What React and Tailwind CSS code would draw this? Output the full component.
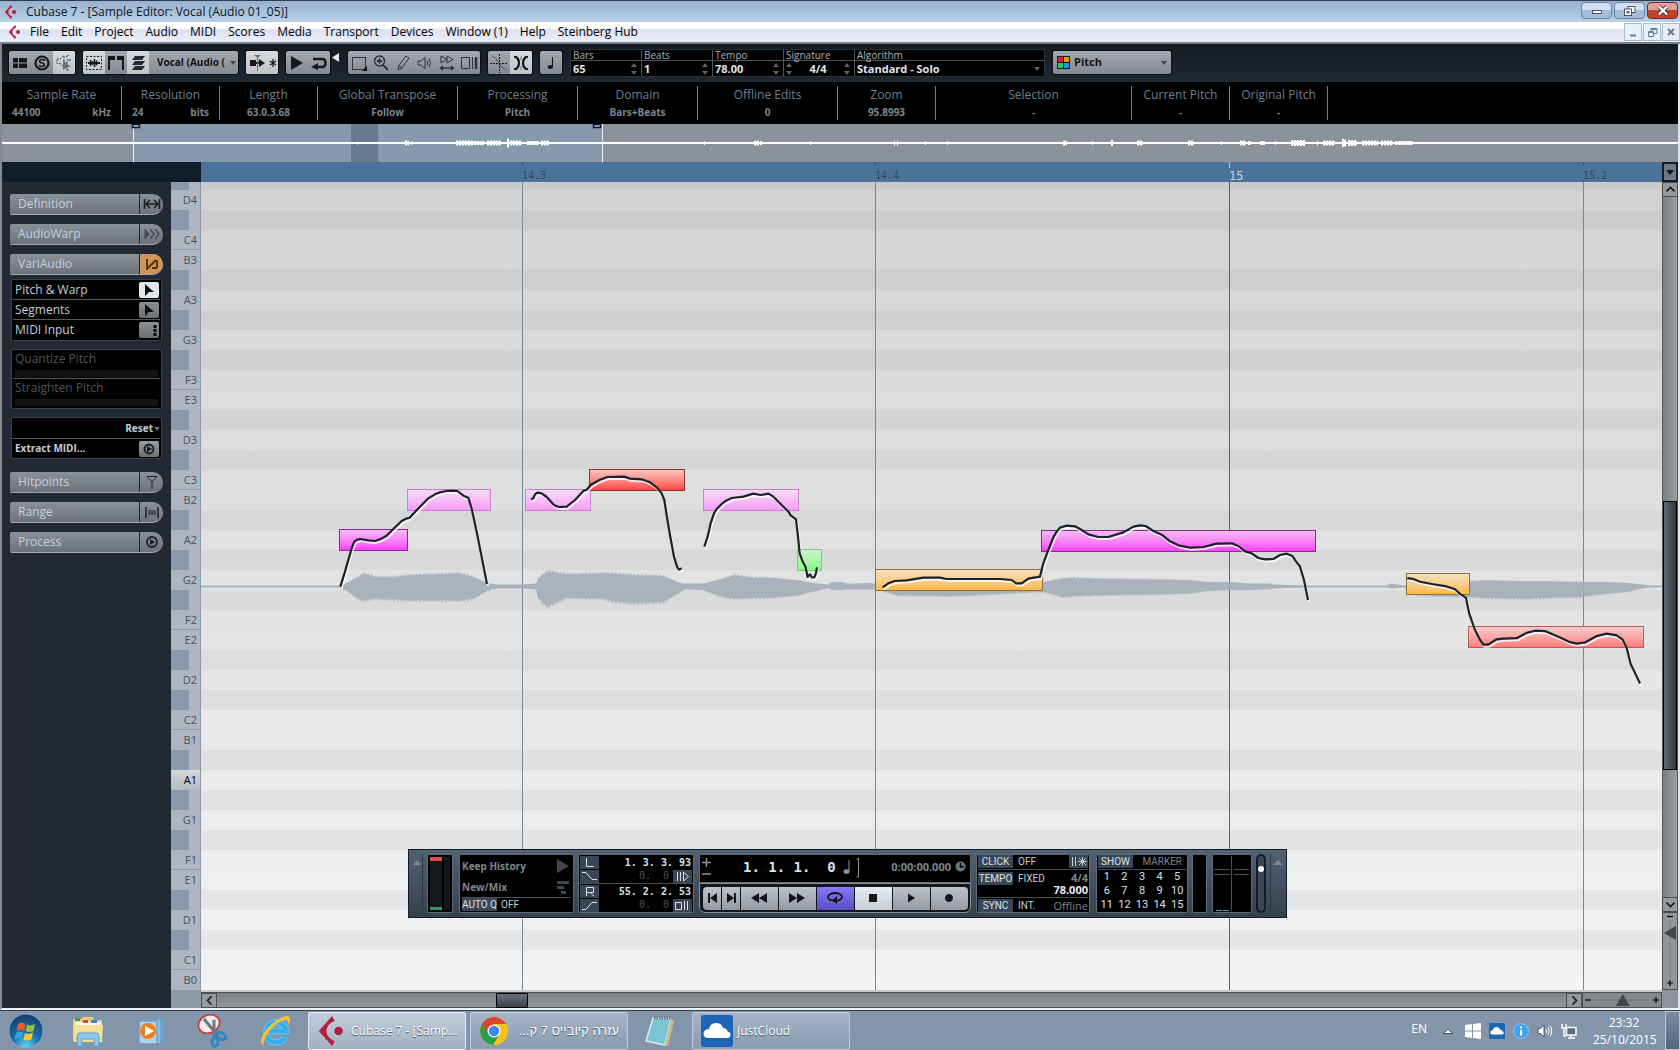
import { useState } from 'react';
import clsx from 'clsx';

const MENU = ['File', 'Edit', 'Project', 'Audio', 'MIDI', 'Scores', 'Media', 'Transport', 'Devices', 'Window (1)', 'Help', 'Steinberg Hub'];

const INFO = [
  { label: 'Sample Rate', value: '44100', unit: 'kHz', width: 'w-[120px]' },
  { label: 'Resolution', value: '24', unit: 'bits', width: 'w-[98px]' },
  { label: 'Length', value: '63.0.3.68', width: 'w-[98px]' },
  { label: 'Global Transpose', value: 'Follow', width: 'w-[140px]' },
  { label: 'Processing', value: 'Pitch', width: 'w-[120px]' },
  { label: 'Domain', value: 'Bars+Beats', width: 'w-[120px]' },
  { label: 'Offline Edits', value: '0', width: 'w-[140px]' },
  { label: 'Zoom', value: '95.8993', width: 'w-[98px]' },
  { label: 'Selection', value: '-', width: 'w-[196px]' },
  { label: 'Current Pitch', value: '-', width: 'w-[98px]' },
  { label: 'Original Pitch', value: '-', width: 'w-[98px]' },
];

// top to bottom; '' is a black key
const OCTAVE = ['B', '', 'A', '', 'G', '', 'F', 'E', '', 'D', '', 'C'];
const KEYS = [
  'D4', '', 'C4',
  ...[3, 2, 1].flatMap((octave) => OCTAVE.map((note) => (note ? note + octave : ''))),
  'B0',
];

const BEAT_LINES = [
  { x: 321, label: '14.3' },
  { x: 674, label: '14.4' },
  { x: 1028, label: '15', bar: true },
  { x: 1382, label: '15.2' },
];

const NOTE_COLORS = {
  magenta: 'border-[#8a2a8c] from-[#f5b9f5] to-[#f93cf9]',
  pink: 'border-[#c87fcb] from-[#f2dcf2] to-[#f99df9]',
  red: 'border-[#8c2f2f] from-[#f5c3c3] to-[#fd4444]',
  rose: 'border-[#c25555] from-[#f3cccc] to-[#fc7d7d]',
  green: 'border-[#7ccb7c] from-[#cdf0cd] to-[#86f986]',
  orange: 'border-[#8d7040] from-[#f4e0c2] to-[#fdb944]',
};

const NOTES = [
  { x: 138, y: 347, w: 69, color: 'magenta' },
  { x: 206, y: 307, w: 84, color: 'pink' },
  { x: 324, y: 307, w: 66, color: 'pink' },
  { x: 388, y: 287, w: 96, color: 'red' },
  { x: 502, y: 307, w: 96, color: 'pink' },
  { x: 596, y: 367, w: 25, color: 'green' },
  { x: 674, y: 387, w: 168, color: 'orange' },
  { x: 840, y: 348, w: 275, color: 'magenta' },
  { x: 1205, y: 391, w: 64, color: 'orange' },
  { x: 1267, y: 444, w: 176, color: 'rose' },
];

// pitch curves, stored at three times the canvas scale
const CURVES = [
  {
    x: 119, y: 258, sy: 3,
    points: '61,440 75,395 95,325 103,305 112,299 120,297 145,301 165,303 182,297 200,287 220,267 245,243 258,236 268,234 300,200 325,175 345,163 360,157 378,153 395,152 412,153 430,167 445,173 455,205 470,275 485,350 501,432',
  },
  {
    x: 119, y: 258, sy: 3,
    points: '633,178 640,175 645,163 652,158 665,160 680,171 700,193 710,199 720,201 740,200 765,180 790,153 800,149 812,135 840,119 862,111 912,110 930,116 965,118 990,127 1010,142 1025,160 1033,180 1040,225 1050,285 1062,350 1072,382 1077,389 1085,385',
  },
  {
    x: 119, y: 258, sy: 3,
    points: '1153,320 1163,290 1172,250 1182,220 1190,207 1205,192 1218,182 1235,174 1270,170 1300,161 1322,165 1345,161 1360,170 1385,195 1405,215 1412,226 1428,238 1434,290 1439,340 1447,362 1457,382 1463,411 1470,403 1475,412 1483,412 1488,400 1491,382',
  },
  {
    x: 639, y: 298, sy: 3,
    points: '128,322 145,310 165,303 200,301 250,293 300,293 320,297 480,297 515,300 528,310 545,310 565,296 600,290 610,250 625,210 640,172 650,155 660,143 680,137 705,139 725,150 745,163 775,171 805,171 850,157 880,140 900,136 917,138 940,153 965,164 990,184 1015,196 1050,203 1090,201 1130,191 1175,190 1195,198 1215,214 1235,220 1255,234 1275,238 1300,237 1320,225 1340,221 1357,228 1368,244 1380,260 1392,300 1404,360',
  },
  {
    x: 1159, y: 298, sy: 2.8,
    points: '142,275 160,277 180,285 220,292 255,297 285,306 300,319 318,330 328,375 345,420 360,448 370,461 385,461 410,446 430,444 470,443 500,428 525,422 555,423 600,441 630,454 650,458 675,455 710,437 740,430 770,435 788,447 800,470 812,515 825,540 840,570',
  },
];

// [x, height above, height below] of the waveform
const ENVELOPE = [
  [0, 1, 1], [138, 1, 1], [146, 4, 5], [152, 8, 10], [159, 12, 15], [163, 15, 16], [174, 11, 14], [192, 11, 15],
  [209, 13, 16], [236, 14, 16], [259, 15, 16], [272, 11, 14], [286, 4, 5], [296, 2, 2], [321, 2, 2], [335, 3, 3],
  [337, 9, 12], [342, 14, 19], [347, 17, 23], [354, 16, 19], [366, 14, 13], [402, 15, 14], [412, 15, 17], [432, 13, 19],
  [462, 12, 18], [477, 5, 8], [484, 3, 3], [502, 3, 4], [519, 8, 11], [534, 13, 14], [552, 10, 13], [569, 10, 13],
  [596, 7, 10], [619, 3, 4], [627, 2, 2], [631, 5, 4], [639, 5, 4], [649, 3, 3], [669, 4, 3], [674, 3, 3],
  [697, 8, 10], [749, 9, 11], [789, 8, 9], [842, 5, 6], [852, 7, 9], [861, 9, 12], [872, 10, 11], [892, 9, 10],
  [959, 8, 9], [989, 7, 8], [1006, 5, 5], [1029, 5, 4], [1049, 3, 4], [1069, 3, 3], [1072, 2, 2], [1106, 1, 1],
  [1186, 1, 1], [1190, 3, 2], [1203, 1, 1], [1215, 6, 10], [1269, 6, 12], [1286, 7, 13], [1322, 6, 14],
  [1346, 6, 13], [1379, 5, 12], [1406, 5, 8], [1426, 4, 6], [1442, 2, 2], [1448, 1, 1], [1461, 1, 1],
];

// [x, width, height] of the bursts on the overview line
const OVERVIEW_PEAKS = [
  [357, 1, 2], [405, 4, 4], [411, 2, 2], [456, 18, 4], [474, 10, 3], [487, 14, 4], [507, 2, 8], [510, 12, 4],
  [527, 12, 3], [541, 8, 4], [704, 1, 3], [754, 5, 4], [760, 2, 3], [810, 1, 3], [894, 1, 4], [897, 1, 4],
  [925, 1, 3], [947, 1, 3], [1063, 4, 4], [1092, 1, 3], [1111, 2, 5], [1137, 6, 4], [1188, 6, 4], [1221, 1, 3],
  [1240, 6, 4], [1248, 3, 3], [1260, 5, 3], [1275, 1, 3], [1291, 14, 5], [1317, 1, 4], [1323, 12, 4], [1342, 4, 7],
  [1348, 9, 5], [1362, 16, 4], [1381, 12, 4], [1395, 18, 3],
];

const peakPath = OVERVIEW_PEAKS.map(([x, w, h]) => {
  let d = '';
  for (let i = 0; i < w; i += 1) {
    const size = i % 3 === 2 ? Math.max(2, h - 2) : h;
    d += `M${x - 1.5 + i} ${18.5 - size / 2} V${19.5 + size / 2} `;
  }
  return d;
}).join('');

const wavePath = () => {
  const top = [];
  const bottom = [];
  let seg = 0;
  for (let x = 0; x <= 1461; x += 1) {
    while (seg < ENVELOPE.length - 2 && x > ENVELOPE[seg + 1][0]) seg += 1;
    const [x0, u0, d0] = ENVELOPE[seg];
    const [x1, u1, d1] = ENVELOPE[seg + 1];
    const t = (x - x0) / (x1 - x0);
    const up = u0 + (u1 - u0) * t;
    const down = d0 + (d1 - d0) * t;
    const ripple = x % 2 ? 1 : 0.82;
    const drift = 1 + 0.06 * Math.sin(x * 1.7);
    top.push(`${x},${(404.5 - up * (up > 3 ? ripple * drift : 1)).toFixed(1)}`);
    bottom.unshift(`${x},${(404.5 + down * (down > 3 ? ripple * drift : 1)).toFixed(1)}`);
  }
  return [...top, ...bottom].join(' ');
};

const WAVE = wavePath();

const Svg = ({ w = 20, h = 20, className, children }) => (
  <svg
    width={w}
    height={h}
    viewBox={`0 0 ${w} ${h}`}
    fill="none"
    stroke="currentColor"
    className={clsx('shrink-0', className)}
    aria-hidden="true"
  >
    {children}
  </svg>
);

const Caret = ({ className }) => (
  <Svg w={6} h={4} className={className}><path d="M0 0 H6 L3 4 Z" fill="currentColor" stroke="none" /></Svg>
);

const CubaseLogo = ({ size = 16 }) => (
  <svg width={size} height={size} viewBox="0 0 16 16" className="shrink-0" aria-hidden="true">
    <path d="M8 0 L1 8 L8 16 L9.500 13.500 Q5 11.500 5 8 Q5 4.500 9.500 2.500 Z" fill="#b3203c" />
    <circle cx="11.500" cy="8" r="2.300" fill="#b3203c" />
  </svg>
);

const TitleBar = () => (
  <header className="flex h-[22px] items-center border-t border-[#2c3a4c] bg-linear-to-b from-[#97b1cf] to-[#b9d0e8] pr-0.5 pl-1">
    <CubaseLogo size={14} />
    <h1 className="ml-2 text-[12px] leading-4 text-[#0c1622]">Cubase 7 - [Sample Editor: Vocal (Audio 01_05)]</h1>
    <div className="ml-auto flex gap-0.5 self-start pt-px">
      <button aria-label="Minimize" className="flex h-[17px] w-[31px] items-center justify-center rounded-sm border border-[#6b86a6] bg-linear-to-b from-[#d2e1f1] from-50% to-[#a3bdd9] to-50%">
        <Svg w={12} h={8}><rect x="1.5" y="3.5" width="9" height="3" fill="#fff" stroke="#4a5666" /></Svg>
      </button>
      <button aria-label="Restore" className="flex h-[17px] w-[31px] items-center justify-center rounded-sm border border-[#6b86a6] bg-linear-to-b from-[#d2e1f1] from-50% to-[#a3bdd9] to-50%">
        <Svg w={14} h={12}>
          <rect x="5" y="1.5" width="7" height="6" fill="#fff" stroke="#4a5666" />
          <rect x="1.5" y="4" width="7" height="6.500" fill="#fff" stroke="#4a5666" />
          <rect x="4" y="6.500" width="2" height="1.500" stroke="#4a5666" />
        </Svg>
      </button>
      <button aria-label="Close" className="flex h-[17px] w-[31px] items-center justify-center rounded-sm border border-[#702a24] bg-linear-to-b from-[#e0a196] from-50% to-[#c2432b] to-50%">
        <Svg w={12} h={11}>
          <path d="M2 1.500 L10 9.500 M10 1.500 L2 9.500" stroke="#4a3a40" strokeWidth="4" />
          <path d="M2 1.500 L10 9.500 M10 1.500 L2 9.500" stroke="#fff" strokeWidth="2.200" />
        </Svg>
      </button>
    </div>
  </header>
);

const MenuBar = () => (
  <nav className="flex h-[22px] items-center border-b-2 border-[#7b8087] bg-linear-to-b from-white from-30% via-[#dce1f2] via-40% to-[#eceefa] pl-2">
    <CubaseLogo size={14} />
    <ul className="ml-2 flex gap-3 text-[12px] leading-4 text-black">
      {MENU.map((item) => (
        <li key={item}><button>{item}</button></li>
      ))}
    </ul>
    <div className="ml-auto flex gap-px text-[#6d7d90]">
      {[
        ['Minimize document', 'M4 10.500 H10'],
        ['Restore document', 'M6 6.500 V3.500 H12 V8.500 H9 M6 4.500 H12 M3.500 6.500 H8.500 V11.500 H3.500 Z M3.500 7.500 H8.500'],
        ['Close document', 'M4 4 L10 10 M10 4 L4 10'],
      ].map(([label, d]) => (
        <button key={label} aria-label={label} className="flex h-[18px] w-[18px] items-center justify-center border border-[#aebccb] bg-[#e6f0fa]">
          <Svg w={14} h={14}><path d={d} strokeWidth={label[0] === 'R' ? 1 : 2} /></Svg>
        </button>
      ))}
    </div>
  </nav>
);

const ToolGroup = ({ children }) => (
  <div className="flex h-[23px] shrink-0 overflow-hidden rounded-xs bg-linear-to-b from-[#a4a9af] to-[#848a91] text-[#15191c] shadow-[0_0_1px_1px_#0a0f14]">
    {children}
  </div>
);

const Tool = ({ label, on, narrow, dim, children }) => (
  <button
    aria-label={label}
    aria-pressed={!!on}
    className={clsx(
      'flex h-full items-center justify-center',
      narrow ? 'w-[10px]' : 'w-[22px]',
      on && 'bg-linear-to-b from-[#d8dadd] to-[#bfc3c7]',
      dim && 'text-[#2c3238]',
    )}
  >
    {children}
  </button>
);

const Stepper = () => (
  <Svg w={6} h={14} className="text-[#5c6268]">
    <path d="M0 5 L3 1 L6 5 Z M0 9 L3 13 L6 9 Z" fill="currentColor" stroke="none" />
  </Svg>
);

const Field = ({ label, value }) => {
  const [text, setText] = useState(value);
  return (
    <div className="flex w-[71px] flex-col border-r border-[#4e555b]">
      <label htmlFor={label} className="h-[11px] border-b border-[#4e555b] pl-0.5 text-[10px] leading-[11px] text-[#a9afb5]">{label}</label>
      <div className="flex flex-1 items-center pr-1 pl-0.5">
        {label === 'Signature' && <Stepper />}
        <input
          id={label}
          value={text}
          onChange={(e) => setText(e.target.value)}
          className={clsx('w-0 flex-1 bg-transparent text-[11px] leading-4 font-bold text-[#e2e5e8] outline-none', label === 'Signature' && 'text-center')}
        />
        <Stepper />
      </div>
    </div>
  );
};

const Toolbar = () => (
  <div className="flex h-[38px] items-center gap-2 bg-linear-to-b from-[#131b23] to-[#1e2933] pb-px pl-[7px]">
    <ToolGroup>
      <Tool label="Show info">
        <Svg w={18} h={18}><path d="M2 4 H7 V8.500 H2 Z M2 9.500 H7 V14 H2 Z M8 4 H16 V8.500 H8 Z M8 9.500 H16 V14 H8 Z" fill="currentColor" stroke="none" /></Svg>
      </Tool>
      <Tool label="Solo">
        <Svg w={18} h={18}>
          <circle cx="9" cy="9" r="6.500" strokeWidth="2.200" />
          <path d="M12 6.500 Q9 4.500 6.800 6.400 Q6 8.500 9 9 Q12 9.500 11.200 11.600 Q9 13.500 6 11.500" strokeWidth="1.600" />
        </Svg>
      </Tool>
      <Tool label="Acoustic feedback" on>
        <Svg w={20} h={20} className="text-[#3a4046]">
          <path d="M3 6 H6 L10 2.500 V14 L6 10.500 H3 Z" strokeDasharray="2 1" />
          <path d="M12 4 L15 2 M13 7 H17 M12 9 L14 10" />
          <path d="M9 7 L17 14 L13 14 L15 18 L13 18 L12 15 L9 17 Z" fill="#6a7076" stroke="none" />
        </Svg>
      </Tool>
    </ToolGroup>

    <ToolGroup>
      <Tool label="Show audio event" on>
        <Svg w={18} h={18}>
          <rect x="1.500" y="2.500" width="15" height="13" strokeDasharray="2 1.500" />
          <path d="M3 9 H15" strokeWidth="2" /><path d="M5.500 6 V12 M7.500 7 V11 M9.500 5 V13 M11.500 6.500 V11.500 M13.500 8 V10" strokeWidth="1.500" />
        </Svg>
      </Tool>
      <Tool label="Show regions">
        <Svg w={18} h={18}><path d="M1 2 H8 V6 H3 V16 H1 Z M17 2 H10 V6 H15 V16 H17 Z" fill="currentColor" stroke="none" /></Svg>
      </Tool>
      <Tool label="Show lanes" on>
        <Svg w={18} h={18}><path d="M6 2 H16 L13 6 H3 Z M6 7 H16 L13 11 H3 Z M6 12 H16 L13 16 H3 Z" fill="#23292e" stroke="none" /></Svg>
      </Tool>
      <div className="flex w-[89px] items-center pr-0.5 pl-2">
        <select aria-label="Edited clip" className="w-0 flex-1 appearance-none bg-transparent text-[10px] font-bold text-[#101417]">
          <option>Vocal (Audio (</option>
        </select>
        <Caret className="text-[#3f464d]" />
      </div>
    </ToolGroup>

    <ToolGroup>
      <Tool label="Auto-scroll" on>
        <Svg w={18} h={18}>
          <path d="M2 6 H8 V12 H2 Z M11 8 V5 L17 9 L11 13 V10 H8 V8 Z" fill="currentColor" stroke="none" />
          <path d="M9.500 3 V17" stroke="#6a7076" /><path d="M6 1 H13 L9.500 4 Z" fill="#6a7076" stroke="none" />
        </Svg>
      </Tool>
      <Tool label="Suspend auto-scroll" on narrow>
        <Svg w={8} h={10}><path d="M4 1 V9 M1 3 L7 7 M7 3 L1 7" strokeWidth="1.300" /></Svg>
      </Tool>
    </ToolGroup>

    <div className="flex items-start">
      <ToolGroup>
        <Tool label="Audition">
          <Svg w={18} h={18}><path d="M3 2 L15 9 L3 16 Z" fill="currentColor" stroke="none" /></Svg>
        </Tool>
        <Tool label="Audition loop">
          <Svg w={18} h={18}><path d="M3 5 H12 Q15.500 5 15.500 9 Q15.500 13 12 13 H4" strokeWidth="2.500" /><path d="M1 13 L8 9 V16 Z" fill="currentColor" stroke="none" /></Svg>
        </Tool>
      </ToolGroup>
      <Svg w={8} h={9} className="mt-0.5 ml-0.5 text-[#e4e6e8]"><path d="M7 0 V9 L0 4.500 Z" fill="currentColor" stroke="none" /></Svg>
    </div>

    <ToolGroup>
      <Tool label="Range selection" dim>
        <Svg w={18} h={18}><rect x="2.500" y="3.500" width="13" height="12" /><path d="M17 12 V17 H12 Z" fill="#111" stroke="none" /></Svg>
      </Tool>
      <Tool label="Zoom" dim>
        <Svg w={18} h={18}><circle cx="7.500" cy="7" r="5" strokeWidth="1.500" /><path d="M5 7 H10 M7.500 4.500 V9.500 M11 11 L16 16" strokeWidth="1.800" /></Svg>
      </Tool>
      <Tool label="Draw" dim>
        <Svg w={18} h={18}><path d="M4 16 L5 11.500 L12 2 L15 4 L8 14 Z M5 11.500 L8 14" /></Svg>
      </Tool>
      <Tool label="Play" dim>
        <Svg w={18} h={18}><path d="M2 7 H5 L9 3.500 V14.500 L5 11 H2 Z M11 6.500 Q12.500 9 11 11.500 M13 4.500 Q16 9 13 13.500" /></Svg>
      </Tool>
      <Tool label="Scrub" dim>
        <Svg w={18} h={18}><path d="M3 2 L9 5.500 L3 9 Z M9 2 L15 5.500 L9 9 Z" /><path d="M3 14 H15 M5 12 L2.500 14 L5 16 M13 12 L15.500 14 L13 16" strokeWidth="1.500" /></Svg>
      </Tool>
      <Tool label="Time warp" dim>
        <Svg w={18} h={18}><path d="M1.500 3.500 H9.500 V14.500 H1.500 Z M12.500 3 V15" /><path d="M16 3 V15" strokeWidth="2.500" /></Svg>
      </Tool>
    </ToolGroup>

    <ToolGroup>
      <Tool label="Snap to zero crossing">
        <Svg w={18} h={20}><path d="M2 3 Q6 4 9 10 T17 17" stroke="#4d5359" /><path d="M0 10.500 H18 M9.500 1 V20" strokeDasharray="2 1" /></Svg>
      </Tool>
      <Tool label="Snap" on>
        <Svg w={18} h={18}><path d="M2 3 H4 Q7 5 7 9 Q7 13 4 15 H2 M16 3 H14 Q11 5 11 9 Q11 13 14 15 H16" strokeWidth="2.200" /><path d="M9 2 V6 M9 12 V16" stroke="#777" /></Svg>
      </Tool>
    </ToolGroup>

    <ToolGroup>
      <Tool label="Quantize">
        <Svg w={14} h={18}><path d="M8.500 3 V13" strokeWidth="1.200" /><ellipse cx="6.300" cy="13" rx="2.700" ry="2" fill="currentColor" stroke="none" /></Svg>
      </Tool>
    </ToolGroup>

    <div className="flex h-[28px] w-[475px] rounded-xs border border-[#27323b] bg-black">
      <Field label="Bars" value="65" />
      <Field label="Beats" value="1" />
      <Field label="Tempo" value="78.00" />
      <Field label="Signature" value="4/4" />
      <div className="flex flex-1 flex-col">
        <label htmlFor="algorithm" className="h-[11px] border-b border-[#4e555b] pl-0.5 text-[10px] leading-[11px] text-[#a9afb5]">Algorithm</label>
        <div className="flex flex-1 items-center pr-1 pl-0.5">
          <select id="algorithm" className="flex-1 appearance-none bg-transparent text-[11px] leading-4 font-bold text-[#e2e5e8]">
            <option>Standard - Solo</option>
          </select>
          <Caret className="text-[#5c6268]" />
        </div>
      </div>
    </div>

    <ToolGroup>
      <div className="flex w-[118px] items-center pr-1 pl-1">
        <Svg w={13} h={13}>
          <rect x="0.500" y="0.500" width="12" height="12" fill="#111" />
          <path d="M1 1 H6 V6 H1 Z" fill="#d5262a" stroke="none" /><path d="M7 1 H12 V6 H7 Z" fill="#dd9822" stroke="none" />
          <path d="M1 7 H6 V12 H1 Z" fill="#24cf6b" stroke="none" /><path d="M7 7 H12 V12 H7 Z" fill="#2492dd" stroke="none" />
        </Svg>
        <select aria-label="Event colors" className="ml-1 flex-1 appearance-none bg-transparent text-[11px] font-bold text-[#101417]">
          <option>Pitch</option>
        </select>
        <Caret className="text-[#3f464d]" />
      </div>
    </ToolGroup>
  </div>
);

const InfoLine = () => (
  <dl className="flex h-[42px] bg-black py-1 text-[#7b858e]">
    {INFO.map(({ label, value, unit, width }) => (
      <div key={label} className={clsx('flex shrink-0 flex-col border-r border-[#757d85] text-center', width)}>
        <dt className="text-[12px] leading-[17px] text-[#6c7f90]">{label}</dt>
        <dd className={clsx('mt-px flex text-[10px] leading-4 font-bold', unit ? 'justify-between px-[10px]' : 'justify-center')}>
          <span>{value}</span>
          {unit && <span>{unit}</span>}
        </dd>
      </div>
    ))}
  </dl>
);

const Overview = () => (
  <div className="relative h-[38px] overflow-hidden bg-[#8b929b]">
    <div className="absolute inset-y-0 left-[131px] w-[470px] border-x border-[#eef1f4] bg-[#8799ad]" />
    <div className="absolute inset-y-0 left-[349px] w-[27px] bg-[#677b8f]" />
    <div className="absolute top-[18px] h-0.5 w-full bg-white" />
    <svg width="1678" height="38" className="absolute top-0 left-0" fill="none" aria-hidden="true">
      <path d={peakPath} stroke="#fff" />
      <path d="M130.500 0.500 H137.500 V3.500 H130.500 Z M591.500 0.500 H598.500 V3.500 H591.500 Z" fill="#a8c0d8" stroke="#0c1a30" strokeWidth="1.500" />
    </svg>
  </div>
);

const SectionButton = ({ label, active, children }) => (
  <button className="flex h-[21px] w-full overflow-hidden rounded-l-xs rounded-r-[11px] border-b border-[#a2a8ad] bg-linear-to-b from-[#8a9197] to-[#6b727a] text-left">
    <span className="flex-1 pl-2 text-[12px] leading-5 text-[#c5d0da]">{label}</span>
    <span className={clsx('flex h-full w-6 items-center justify-center border-l border-[#1f252b] text-[#1c2125]', active && 'bg-[#cf9558] text-[#4a2f10]')}>
      {children}
    </span>
  </button>
);

const PanelRow = ({ label, lit, children }) => (
  <div className="flex h-5 items-center justify-between border-b border-[#565b60] pr-px last:border-b-0">
    <span className="pl-0.5 text-[12px] leading-4 text-[#c3cdd5]">{label}</span>
    <button
      aria-label={label}
      className={clsx('flex h-4 w-5 items-center justify-center rounded-xs text-[#0c0e10]', lit ? 'bg-[#e3e6ea]' : 'bg-linear-to-b from-[#8b9094] to-[#6b7074]')}
    >
      {children}
    </button>
  </div>
);

const Pointer = () => (
  <Svg w={10} h={12}><path d="M1 0 L10 8 H5 L1 12 Z" fill="currentColor" stroke="none" /></Svg>
);

const Dial = ({ r = 5 }) => (
  <Svg w={14} h={14}><circle cx="7" cy="7" r={r} strokeWidth="1.800" /><path d="M5 4 L10 7 L5 10 Z" fill="currentColor" stroke="none" /></Svg>
);

const Sidebar = () => (
  <aside className="flex w-[169px] shrink-0 flex-col bg-[#222933]">
    <div className="h-5 bg-[#0f1c29]" />
    <div className="flex flex-col gap-[9px] px-2 pt-3">
      <SectionButton label="Definition">
        <Svg w={18} h={12}><path d="M1.500 1 V11 M16.500 1 V11 M3 6 H15 M7 2 L3 6 L7 10 M11 2 L15 6 L11 10" strokeWidth="1.600" /></Svg>
      </SectionButton>
      <SectionButton label="AudioWarp">
        <Svg w={16} h={10} className="text-[#474c52]"><path d="M1 0 L5 5 L1 10 Z" fill="currentColor" /><path d="M6 0 L10 5 L6 10 M11 0 L15 5 L11 10" strokeWidth="1.500" /></Svg>
      </SectionButton>
      <SectionButton label="VariAudio" active>
        <Svg w={14} h={12}><path d="M2 1 V11 L11 2 M12 2 V10 M7 10 H12" strokeWidth="1.800" /></Svg>
      </SectionButton>
    </div>

    <div className="mx-[9px] mt-1 flex flex-col gap-2">
      <div className="rounded-xs border border-[#3a424b] bg-black px-px">
        <PanelRow label="Pitch &amp; Warp" lit><Pointer /></PanelRow>
        <PanelRow label="Segments"><Pointer /></PanelRow>
        <PanelRow label="MIDI Input">
          <Svg w={18} h={14}><path d="M15 2 V13" strokeWidth="3" strokeDasharray="3 1" /></Svg>
        </PanelRow>
      </div>
      <div className="rounded-xs border border-[#3a424b] bg-black px-px">
        {['Quantize Pitch', 'Straighten Pitch'].map((label) => (
          <div key={label} className="h-[29px] border-b border-[#565b60] px-0.5 pt-px last:border-b-0">
            <div className="text-[12px] leading-4 text-[#4f5458]">{label}</div>
            <div className="mt-[3px] h-[7px] bg-[#121416]" />
          </div>
        ))}
      </div>
      <div className="rounded-xs border border-[#3a424b] bg-black px-px pt-px text-[10px] font-bold text-[#c3cdd5]">
        <button className="flex h-5 w-full items-center justify-end gap-px border-b border-[#565b60]">
          Reset
          <Caret className="text-[#6a7076]" />
        </button>
        <div className="flex h-[19px] items-center justify-between pr-px pl-0.5">
          <span>Extract MIDI...</span>
          <button aria-label="Extract MIDI" className="flex h-4 w-5 items-center justify-center rounded-xs bg-linear-to-b from-[#9b9fa3] to-[#6b7074] text-[#15191c]"><Dial r={4.5} /></button>
        </div>
      </div>
    </div>

    <div className="mt-[13px] flex flex-col gap-[9px] px-2">
      <SectionButton label="Hitpoints">
        <Svg w={12} h={14}><path d="M1 1.500 H11 L6 7 Z M6 7 V14" /></Svg>
      </SectionButton>
      <SectionButton label="Range">
        <Svg w={14} h={12}><path d="M1 1 V12 M13 1 V12" strokeWidth="1.500" /><path d="M3 4 H11 V9 H3 Z" fill="#4c5156" stroke="none" /></Svg>
      </SectionButton>
      <SectionButton label="Process"><Dial /></SectionButton>
    </div>
  </aside>
);

const Keyboard = () => (
  <div className="flex w-[30px] shrink-0 flex-col overflow-hidden bg-[#8c99a6]">
    <div className="h-5 shrink-0 bg-[#0f1c29]" />
    <div className="min-h-0 flex-1 overflow-hidden border-r border-[#8b98a6] bg-[#aeb7c1]">
      <div className="h-2 w-[18px] bg-[#8a9aaa]" />
      {KEYS.map((key, i) => {
        const name = key[0];
        return (
          <div
            key={i}
            className={clsx(
              'flex h-5 text-[11px] leading-5',
              (name === 'C' || name === 'F') && 'border-b border-[#8a9aaa]',
              key === 'A1' ? 'bg-linear-to-b from-[#d4d8dd] to-[#b3bbc4] text-black' : 'text-[#4a525a]',
            )}
          >
            {key ? <span className="ml-auto pr-[3px]">{key}</span> : <span className="w-[18px] bg-[#8a9aaa]" />}
          </div>
        );
      })}
    </div>
    <div className="h-[18px] shrink-0" />
  </div>
);

const LcdTag = ({ children, className }) => (
  <button className={clsx('flex h-[13px] items-center justify-center bg-[#384656] font-[Roboto] text-[10px] leading-3 whitespace-nowrap text-[#dbe2e8]', className)}>{children}</button>
);

const LOCATORS = [
  { tag: 'Left locator', icon: 'M6.500 2 V10.500 H14', time: '1. 3. 3. 93', fade: 'M2 2.500 H6 L12 9.500 H17', side: 'M4.500 2 V11 M7.500 2 V11 M10.500 2 L15.500 6.500 L10.500 11 Z' },
  { tag: 'Right locator', icon: 'M6.500 11 V2.500 H13.500 V7.500 H6.500 M10 7.500 L14 11', time: '55. 2. 2. 53', fade: 'M2 10.500 H6 L12 3.500 H17', side: 'M2.500 3.500 H8.500 V10.500 H2.500 Z M11.500 2 V11 M14.500 2 V11' },
];

const TRANSPORT = [
  { label: 'Go to start', half: true, d: 'M3 2 H5 V12 H3 Z M12 2 V12 L5 7 Z' },
  { label: 'Go to end', half: true, d: 'M10 2 H12 V12 H10 Z M3 2 V12 L10 7 Z' },
  { label: 'Rewind', d: 'M7 2 V12 L-1 7 Z M15 2 V12 L7 7 Z' },
  { label: 'Forward', d: 'M-1 2 V12 L7 7 Z M7 2 V12 L15 7 Z' },
  { label: 'Cycle', cycle: true },
  { label: 'Stop', d: 'M3 3 H11 V11 H3 Z', lit: true },
  { label: 'Start', d: 'M4 2.500 L11 7 L4 11.500 Z' },
  { label: 'Record', d: 'M7 3 A4 4 0 1 1 6.990 3 Z' },
];

const TransportPanel = () => (
  <section aria-label="Transport" className="absolute top-[667px] left-[207px] flex h-[69px] w-[879px] items-stretch border border-[#131c26] bg-linear-to-b from-[#526270] to-[#33414e] py-1">
    <div className="w-[14px] border-r border-[#2c3743] pt-1.5 pl-1">
      <Svg w={8} h={5} className="text-[#7d8994]"><path d="M0 5 L4 0 L8 5 Z" fill="currentColor" stroke="none" /></Svg>
    </div>

    <div className="ml-1 flex w-[26px] gap-0.5 rounded-xs border border-[#5f6b76] bg-black p-0.5">
      <div className="flex w-3 flex-col justify-between bg-[#15181a]">
        <div className="h-1 bg-[#e2474a]" />
        <div className="h-[3px] bg-[#36976c]" />
      </div>
      <div className="flex-1 bg-[#15181a]" />
    </div>

    <div className="ml-1.5 flex w-[115px] flex-col rounded-xs border border-[#5f6b76] bg-black px-0.5 text-[10px] font-bold text-[#7e868d]">
      <button className="flex h-[22px] items-center justify-between pr-0.5">
        Keep History
        <Svg w={13} h={14} className="text-[#3f464c]"><path d="M1 0 L13 7 L1 14 Z" fill="currentColor" stroke="none" /></Svg>
      </button>
      <button className="flex h-[21px] items-center justify-between border-b border-[#4a4f54] pr-0.5">
        New/Mix
        <Svg w={13} h={14} className="text-[#3f464c]"><path d="M1 1 H13 V4 H1 Z M1 6 H8 V9 H1 Z M5 11 H10 V14 H5 Z" fill="currentColor" stroke="none" /></Svg>
      </button>
      <div className="flex items-center gap-1 font-[Roboto] text-[10px] leading-[13px] font-normal text-[#c8cfd5]">
        <LcdTag className="w-[35px]">AUTO Q</LcdTag>
        OFF
      </div>
    </div>

    <div className="ml-1 flex w-[116px] flex-col rounded-xs border border-[#5f6b76] bg-black font-[DejaVu_Sans_Mono] text-[10px] leading-[14px]">
      {LOCATORS.map(({ tag, icon, time, fade, side }) => (
        <div key={tag} className="flex h-[29px] justify-between border-b border-[#4a4f54] p-px text-[#dbe2e8] last:border-b-0">
          <div className="flex flex-col gap-px">
            <button aria-label={tag} className="h-[13px] w-[19px] bg-[#384656]"><Svg w={19} h={13}><path d={icon} /></Svg></button>
            <button aria-label={`${tag} punch`} className="h-[13px] w-[19px] bg-[#384656]"><Svg w={19} h={13}><path d={fade} /></Svg></button>
          </div>
          <div className="flex flex-col items-end">
            <span className="pr-px leading-[13px] font-bold whitespace-pre">{time}</span>
            <span className="flex items-center gap-1 text-[#4c5258]">
              <span className="whitespace-pre">0.  0</span>
              <button aria-label={`${tag} roll`} className="h-[13px] w-[19px] bg-[#384656] text-[#dbe2e8]"><Svg w={19} h={13}><path d={side} /></Svg></button>
            </span>
          </div>
        </div>
      ))}
    </div>

    <div className="ml-[5px] flex w-[272px] flex-col">
      <div className="flex h-[29px] items-center rounded-t-xs border border-[#5f6b76] bg-black px-0.5 pb-1 text-[#dbe2e8]">
        <div className="flex flex-col gap-1.5 text-[#8b949c]">
          <Svg w={9} h={9}><path d="M0 4.500 H9 M4.500 0 V9" strokeWidth="1.500" /></Svg>
          <Svg w={9} h={2}><path d="M0 1 H9" strokeWidth="1.500" /></Svg>
        </div>
        <span className="ml-8 font-[DejaVu_Sans_Mono] text-[14px] leading-5 font-bold whitespace-pre">1. 1. 1.  0</span>
        <Svg w={22} h={22} className="ml-1 text-[#8b949c]">
          <path d="M9 4 V15" /><ellipse cx="6.500" cy="15.500" rx="3" ry="2.300" fill="currentColor" stroke="none" />
          <path d="M18.500 2 V21 M16.500 4 L18.500 2 M16.500 21 H18.500" />
        </Svg>
        <span className="ml-auto text-[11px] leading-4 font-bold text-[#7e868d]">0:00:00.000</span>
        <Svg w={11} h={11} className="mr-0.5 ml-1"><circle cx="5.500" cy="5.500" r="5" fill="#6a747d" stroke="none" /><path d="M5.500 2 V6 H8.500" stroke="#000" strokeWidth="1.500" /></Svg>
      </div>
      <div className="flex flex-1 items-center justify-center rounded-b-md border border-[#8b949c] bg-[#10161c]">
        <div className="flex h-[23px] gap-px overflow-hidden rounded-sm">
          {TRANSPORT.map(({ label, half, d, lit, cycle }) => (
            <button
              key={label}
              aria-label={label}
              className={clsx(
                'flex items-center justify-center text-[#14181c]',
                half ? 'w-[18px]' : 'w-[37px]',
                cycle ? 'bg-linear-to-b from-[#8a78f6] to-[#5b4cc4]' : lit ? 'bg-linear-to-b from-[#e9edf2] to-[#c6ccd4]' : 'bg-linear-to-b from-[#bcc2ca] to-[#949ba4]',
              )}
            >
              {cycle ? (
                <Svg w={18} h={14}><ellipse cx="9" cy="6" rx="7" ry="4" strokeWidth="1.800" /><path d="M11 5 V13 L6 9.500 Z" fill="currentColor" stroke="none" /></Svg>
              ) : (
                <Svg w={14} h={14} className="overflow-visible"><path d={d} fill="currentColor" stroke="none" /></Svg>
              )}
            </button>
          ))}
        </div>
      </div>
    </div>

    <div className="ml-[5px] flex w-[114px] flex-col rounded-xs border border-[#5f6b76] bg-black px-px font-[Roboto] text-[10px] leading-[13px] text-[#c8cfd5]">
      <div className="flex h-[15px] gap-[5px] border-b border-[#4a4f54]">
        <LcdTag className="w-[35px]">CLICK</LcdTag>
        OFF
        <button aria-label="Precount" className="ml-auto h-[13px] w-[19px] bg-[#384656]">
          <Svg w={19} h={13}><path d="M3.500 2 V11 M6.500 2 V11 M13.500 2 V11 M9 6.500 H18 M10 3 L17 10 M17 3 L10 10" /></Svg>
        </button>
      </div>
      <div className="flex h-[28px] gap-[5px] border-b border-[#4a4f54] pt-0.5">
        <LcdTag className="w-[35px]">TEMPO</LcdTag>
        FIXED
        <div className="ml-auto text-right font-[Open_Sans] text-[11px] leading-3 font-bold">
          <div className="text-[#7e868d]">4/4</div>
          <div className="text-[#e9edf2]">78.000</div>
        </div>
      </div>
      <div className="flex gap-[5px] pt-px">
        <LcdTag className="w-[35px]">SYNC</LcdTag>
        INT.
        <span className="ml-auto font-[Open_Sans] text-[11px] text-[#7e868d]">Offline</span>
      </div>
    </div>

    <div className="ml-1.5 flex w-[92px] flex-col rounded-xs border border-[#5f6b76] bg-black px-px font-[Roboto] text-[10px] text-[#dbe2e8]">
      <div className="flex h-[15px] justify-between border-b border-[#4a4f54] pr-1">
        <LcdTag className="w-[35px]">SHOW</LcdTag>
        <span className="leading-[13px] text-[#7e868d]">MARKER</span>
      </div>
      <div className="grid flex-1 grid-cols-5 text-[11px] leading-[14px]">
        {Array.from({ length: 15 }, (_, i) => (
          <button key={i} className="text-center">{i + 1}</button>
        ))}
      </div>
    </div>

    <div className="ml-1 w-[15px] rounded-xs border border-[#5f6b76] bg-black" />
    <div className="ml-[5px] w-10 rounded-xs border border-[#5f6b76] bg-black">
      <Svg w={38} h={57} className="text-[#4a5157]">
        <path d="M18.500 1 V56 M1 14.500 H17 M21 14.500 H36 M1 19.500 H17 M21 19.500 H36" />
        <path d="M3 55.500 H9 M10 55.500 H16" stroke="#3fa9b8" />
      </Svg>
    </div>
    <input
      type="range"
      aria-label="Output level"
      defaultValue={79}
      className="ml-1 h-[59px] w-[10px] appearance-none rounded-full border-2 border-[#131c26] bg-[#3a4855] [direction:rtl] [writing-mode:vertical-lr] [&::-webkit-slider-thumb]:size-[6px] [&::-webkit-slider-thumb]:appearance-none [&::-webkit-slider-thumb]:rounded-full [&::-webkit-slider-thumb]:bg-white"
    />
    <div className="ml-1 flex-1 border-l border-[#2c3743] pt-1.5 pl-0.5">
      <Svg w={10} h={5} className="text-[#7d8994]"><path d="M0 5 L5 0 L10 5 Z" fill="currentColor" stroke="none" /></Svg>
    </div>
  </section>
);

const Canvas = () => (
  <div className="relative min-h-0 flex-1 overflow-hidden bg-linear-to-b from-[#d2d3d4] to-[#f3f3f3]">
    <div className="h-2 bg-black/4" />
    {KEYS.map((key, i) => (
      <div key={i} className={clsx('h-5', !key && 'bg-black/4')} />
    ))}
    {BEAT_LINES.map(({ x, bar }) => (
      <div key={x} className={clsx('absolute inset-y-0 w-px', bar ? 'bg-[#4f6577]' : 'bg-[#74899b]')} style={{ left: x }} />
    ))}
    <svg width="1461" height="810" className="absolute top-0 left-0" aria-hidden="true">
      <polygon points={WAVE} fill="#a3adb7" fillOpacity="0.9" />
    </svg>
    {NOTES.map(({ x, y, w, color }) => (
      <div key={x} className={clsx('absolute h-[22px] border bg-linear-to-b', NOTE_COLORS[color])} style={{ left: x, top: y, width: w }} />
    ))}
    <svg width="1461" height="810" className="absolute top-0 left-0" fill="none" strokeLinejoin="round" aria-hidden="true">
      {[
        { color: '#fff', shift: 2, opacity: 0.8 },
        { color: '#1b222b', shift: 0, opacity: 1 },
      ].map(({ color, shift, opacity }) =>
        CURVES.map(({ x, y, sy, points }, i) => (
          <polyline
            key={color + i}
            points={points}
            transform={`translate(${x + shift / 2} ${y + shift}) scale(${1 / 3} ${1 / sy})`}
            stroke={color}
            strokeOpacity={opacity}
            strokeWidth="2.2"
            vectorEffect="non-scaling-stroke"
          />
        )),
      )}
    </svg>
    <TransportPanel />
  </div>
);

const Ruler = () => (
  <div className="relative h-5 shrink-0 overflow-hidden bg-[#4b7299]">
    {BEAT_LINES.map(({ x, label, bar }) => (
      <div key={x} className="absolute top-0 h-full" style={{ left: x }}>
        <div className={clsx('w-px', bar ? 'h-1.5 bg-[#b5cce0]' : 'h-[3px] bg-[#33506b]')} />
        <span className={clsx('absolute bottom-0 left-0 font-[DejaVu_Sans_Mono] leading-3', bar ? 'text-[12px] text-[#c3d8ea]' : 'text-[10px] text-[#2f4a64]')}>{label}</span>
      </div>
    ))}
  </div>
);

const ScrollButton = ({ label, d }) => (
  <button aria-label={label} className="flex h-[15px] w-4 shrink-0 items-center justify-center border border-[#4c4f52] bg-[#95999b] text-[#15191c]">
    <Svg w={9} h={9}><path d={d} strokeWidth="1.600" /></Svg>
  </button>
);

const HScroll = () => (
  <div className="flex h-[18px] shrink-0 items-start border-t-2 border-[#c6c9cb] bg-[#8c9399]">
    <div className="flex h-4 flex-1 items-center border-y border-[#4c4f52] bg-linear-to-b from-[#7e8284] to-[#95999b]">
      <ScrollButton label="Scroll left" d="M6.500 0.500 L2.500 4.500 L6.500 8.500" />
      <div className="ml-[279px] h-[15px] w-8 border border-black bg-linear-to-b from-[#64707b] to-[#38434d]" />
      <div className="ml-auto"><ScrollButton label="Scroll right" d="M2.500 0.500 L6.500 4.500 L2.500 8.500" /></div>
    </div>
    <div className="flex h-4 w-20 items-center gap-1 border border-[#4c4f52] bg-[#85898b] px-0.5 text-black">
      <button aria-label="Zoom out"><Svg w={6} h={8}><path d="M0 4 H6" strokeWidth="1.200" /></Svg></button>
      <input
        type="range"
        aria-label="Horizontal zoom"
        defaultValue={52}
        className="h-3 w-0 flex-1 appearance-none bg-linear-to-b from-transparent from-45% via-[#3c3f42] via-50% to-transparent to-55% [&::-webkit-slider-thumb]:h-3 [&::-webkit-slider-thumb]:w-[14px] [&::-webkit-slider-thumb]:appearance-none [&::-webkit-slider-thumb]:bg-[#42464a] [&::-webkit-slider-thumb]:[clip-path:polygon(50%_0,100%_100%,0_100%)]"
      />
      <button aria-label="Zoom in"><Svg w={6} h={8}><path d="M0 4 H6 M3 1 V7" strokeWidth="1.200" /></Svg></button>
    </div>
  </div>
);

const VScroll = () => (
  <div className="flex w-4 shrink-0 flex-col bg-[#8c9399]">
    <button aria-label="Ruler format" className="flex h-5 shrink-0 items-center justify-center border-2 border-[#0f1c29] bg-[#6d7a86]">
      <Svg w={8} h={5} className="text-[#0c131a]"><path d="M0 0 H8 L4 5 Z" fill="currentColor" stroke="none" /></Svg>
    </button>
    <ScrollButton label="Scroll up" d="M0.500 6.500 L4.500 2.500 L8.500 6.500" />
    <div className="flex min-h-0 flex-1 flex-col border-x border-[#55585b] bg-linear-to-r from-[#7c8082] to-[#9a9ea0]">
      <div className="flex-[304]" />
      <div className="flex-[268] border border-black bg-linear-to-r from-[#5e6a74] to-[#2c3945]" />
      <div className="flex-[127]" />
    </div>
    <ScrollButton label="Scroll down" d="M0.500 2.500 L4.500 6.500 L8.500 2.500" />
    <div className="flex h-[78px] shrink-0 flex-col items-center gap-0.5 border border-[#4c4f52] bg-[#929698] py-0.5 text-black">
      <button aria-label="Zoom out vertically"><Svg w={6} h={4}><path d="M0 1.500 H6" strokeWidth="1.200" /></Svg></button>
      <input
        type="range"
        aria-label="Vertical zoom"
        defaultValue={12}
        className="h-0 w-3 flex-1 appearance-none bg-linear-to-r from-transparent from-45% via-[#3c3f42] via-50% to-transparent to-55% [writing-mode:vertical-lr] [&::-webkit-slider-thumb]:h-[14px] [&::-webkit-slider-thumb]:w-3 [&::-webkit-slider-thumb]:appearance-none [&::-webkit-slider-thumb]:bg-[#42464a] [&::-webkit-slider-thumb]:[clip-path:polygon(0_50%,100%_0,100%_100%)]"
      />
      <button aria-label="Zoom in vertically"><Svg w={6} h={8}><path d="M0 4 H6 M3 1 V7" strokeWidth="1.200" /></Svg></button>
    </div>
    <div className="h-[18px] shrink-0" />
  </div>
);

const TaskButton = ({ title, active, rtl, children }) => (
  <button
    className={clsx(
      'flex h-[38px] w-[158px] items-center gap-1 rounded-xs border px-2 text-left text-[12px] leading-4 text-white',
      active ? 'border-[#e3e9f0] bg-linear-to-b from-[#c3cedb] to-[#a2b1c3]' : 'border-[#c3cddb] bg-linear-to-b from-[#a5b3c5] to-[#8a9cb2]',
    )}
  >
    {children}
    <span dir={rtl ? 'rtl' : 'ltr'} className={clsx('min-w-0 flex-1 whitespace-nowrap [text-shadow:0_1px_1px_#44566c]', rtl && 'text-right font-[Liberation_Sans] text-[13px]')}>{title}</span>
  </button>
);

const Launcher = ({ label, wide, children }) => (
  <button aria-label={label} className={clsx('flex h-[38px] items-center justify-center', wide ? 'w-16' : 'w-[62px]')}>{children}</button>
);

const CloudTile = ({ size }) => (
  <svg width={size} height={size} viewBox="0 0 32 32" className="shrink-0" aria-hidden="true">
    <rect width="32" height="32" rx="3" fill="#1d64b4" />
    <path d="M8 23 Q2.500 23 2.500 18.500 Q3 14 8 14 Q9 8 15 8 Q21 8 22 13 Q26 13 26.500 16.500 Q30 17 29.500 20 Q29 23 26 23 Z" fill="#fff" />
  </svg>
);

const Taskbar = () => (
  <footer className="flex h-10 shrink-0 items-center border-t border-[#33414f] bg-[#8395ab]">
    <button aria-label="Start" className="flex w-14 justify-center pr-1">
      <svg width="36" height="36" viewBox="0 0 36 36" aria-hidden="true">
        <defs>
          <radialGradient id="orb" cx="50%" cy="95%" r="90%">
            <stop offset="0" stopColor="#5fd6f5" /><stop offset="0.450" stopColor="#1b6fae" /><stop offset="1" stopColor="#163f6d" />
          </radialGradient>
        </defs>
        <circle cx="18" cy="18" r="17" fill="url(#orb)" stroke="#7fa6c6" />
        <path d="M10 11 Q14 8.500 17.500 11 L16 18 Q13 16 8.500 18 Z" fill="#ee5a28" />
        <path d="M19 11.500 Q23 13.500 27 11 L25.500 18 Q21.500 20 17.500 18 Z" fill="#8cc63e" />
        <path d="M8 19.500 Q12 17.500 15.500 19.500 L14 26 Q11 24.500 6.500 26.500 Z" fill="#36a3e0" />
        <path d="M17 20 Q21 22 25 19.500 L23.500 26.500 Q19.500 28.500 15.500 26.500 Z" fill="#fdc820" />
      </svg>
    </button>
    <Launcher label="Explorer" wide>
      <svg width="34" height="32" viewBox="0 0 34 32" aria-hidden="true">
        <path d="M2 4 H10 L12 2 H22 L23 5 H31 V26 H2 Z" fill="#e8cf7e" />
        <path d="M4 7 H30 V10 H4 Z" fill="#fffbe8" /><path d="M4 3 H9 V6 H4 Z" fill="#3fa34d" /><path d="M12 5 H17 V8 H12 Z" fill="#c8503c" /><path d="M20 5 H26 V8 H20 Z" fill="#3a86d0" />
        <path d="M2 10 H32 L31 27 H3 Z" fill="#f5e09a" />
        <path d="M6 31 V21 Q6 18 10 18 H24 Q28 18 28 21 V31 H23 V24 H11 V31 Z" fill="#8cc7ea" stroke="#5e9fc8" />
      </svg>
    </Launcher>
    <Launcher label="Media player">
      <svg width="28" height="28" viewBox="0 0 28 28" aria-hidden="true">
        <path d="M8 2 H26 V25 H8 Z" fill="#6aa5d2" /><path d="M5 3 H23 V26 H5 Z" fill="#8dbce0" /><path d="M2 4 H20 V27 H2 Z" fill="#a9d0ee" stroke="#5c8cb4" />
        <circle cx="11" cy="14" r="8" fill="#f0801e" /><path d="M8 9 L17 14 L8 19 Z" fill="#fff" />
      </svg>
    </Launcher>
    <Launcher label="Snipping tool">
      <svg width="34" height="34" viewBox="0 0 32 34" aria-hidden="true">
        <ellipse cx="12" cy="10" rx="11" ry="9" fill="#f3e9ea" stroke="#c9414b" strokeWidth="2" transform="rotate(-25 12 10)" />
        <path d="M7 5 L21 22 M17 6 L17 24" stroke="#6c7887" strokeWidth="3" />
        <ellipse cx="24" cy="22" rx="5" ry="3" fill="none" stroke="#2f86c4" strokeWidth="3" transform="rotate(30 24 22)" />
        <ellipse cx="18" cy="28" rx="3" ry="4.500" fill="none" stroke="#2f86c4" strokeWidth="3" />
      </svg>
    </Launcher>
    <Launcher label="Internet Explorer" wide>
      <svg width="34" height="34" viewBox="0 0 34 34" aria-hidden="true">
        <path d="M26 23 A10 10 0 1 1 27 17 H9" fill="none" stroke="#5cc4f4" strokeWidth="6.500" />
        <path d="M26 23 A10 10 0 1 1 27 17 H9" fill="none" stroke="#36aeea" strokeWidth="4" />
        <path d="M5 31 Q-2 29 7 16 Q18 3 28 2 Q34 3 29 12 Q30 5 26 6 Q18 7 10 18 Q3 28 5 31 Z" fill="#f2c230" />
      </svg>
    </Launcher>
    <div className="flex items-center">
      <TaskButton title="Cubase 7 - [Samp..." active><CubaseLogo size={30} /></TaskButton>
      <div className="ml-1">
        <TaskButton title="עזרה קיובייס 7 ק..." rtl>
          <svg width="30" height="30" viewBox="0 0 30 30" className="shrink-0" aria-hidden="true">
            <circle cx="15" cy="15" r="14" fill="#fbc116" />
            <path d="M15 15 L2.900 8 A14 14 0 0 0 14 29 L20 19 Z" fill="#2c9f4b" />
            <path d="M2.900 8 A14 14 0 0 1 27.100 8 H15 L9 18 Z" fill="#db4437" />
            <circle cx="15" cy="15" r="6.500" fill="#fff" /><circle cx="15" cy="15" r="5.200" fill="#4285f4" />
          </svg>
        </TaskButton>
      </div>
      <Launcher label="Notepad" wide>
        <svg width="34" height="32" viewBox="0 0 34 32" aria-hidden="true">
          <path d="M10 3 L28 3 L22 30 L3 26 Z" fill="#79c3d3" stroke="#dcecef" strokeWidth="1.500" />
          <path d="M28 3 L31 6 L25 31 L22 30 Z" fill="#c9b98c" /><path d="M11 3 H29" stroke="#65707a" strokeWidth="3" strokeDasharray="1.500 1" />
        </svg>
      </Launcher>
      <TaskButton title="JustCloud"><CloudTile size={32} /></TaskButton>
    </div>

    <div className="ml-auto flex h-full items-center text-[12px] leading-4 text-white">
      <button className="mr-4 pb-1">EN</button>
      <Svg w={10} h={6} className="mr-3"><path d="M0.500 5.500 L5 1 L9.500 5.500 Z" fill="#fff" stroke="#44566c" /></Svg>
      <div className="flex gap-2">
        <Svg w={16} h={16}><path d="M0 2 L7 1 V7.500 H0 Z M8 1 L16 0 V7.500 H8 Z M0 8.500 H7 V15 L0 14 Z M8 8.500 H16 V16 L8 15 Z" fill="#fff" stroke="none" /></Svg>
        <CloudTile size={16} />
        <Svg w={16} h={16}><circle cx="8" cy="8" r="7.500" fill="#3fa4ee" stroke="#86c6f4" /><path d="M8 7 V12.500 M8 3.500 V5.500" strokeWidth="2" /></Svg>
        <Svg w={16} h={16}><path d="M1 5.500 H3.500 L7 2 V14 L3.500 10.500 H1 Z" fill="#fff" stroke="#44566c" /><path d="M9 6 Q10.500 8 9 10 M11 4 Q13.500 8 11 12 M13 2.500 Q16.500 8 13 13.500" /></Svg>
        <Svg w={16} h={16}><path d="M5.500 4.500 H15 V12 H5.500 Z" fill="#5a6c80" strokeWidth="1.500" /><path d="M7 15 H14 M10 12 V15 M1 1 V5 H5 V1 M3 5 V13 H5" strokeWidth="1.500" /></Svg>
      </div>
      <time className="ml-4 w-[62px] text-center leading-[17px]">23:32<br />25/10/2015</time>
      <button aria-label="Show desktop" className="ml-2.5 h-[39px] w-[15px] border border-[#bcc7d4] bg-linear-to-b from-[#7c8ca0] to-[#55657a]" />
    </div>
  </footer>
);

const App = () => (
  <div className="flex h-screen flex-col overflow-hidden bg-[#8395ab] font-['Open_Sans','Noto_Sans','Liberation_Sans',sans-serif]">
    <TitleBar />
    <MenuBar />
    <main className="flex min-h-0 flex-1 flex-col border-r-2 border-b-2 border-l-2 border-r-[#dfe5ec] border-b-[#eef1f5] border-l-[#85898b]">
      <Toolbar />
      <InfoLine />
      <Overview />
      <div className="flex min-h-0 flex-1">
        <Sidebar />
        <Keyboard />
        <div className="flex min-w-0 flex-1 flex-col">
          <Ruler />
          <Canvas />
          <HScroll />
        </div>
        <VScroll />
      </div>
    </main>
    <Taskbar />
  </div>
);

export default App;
